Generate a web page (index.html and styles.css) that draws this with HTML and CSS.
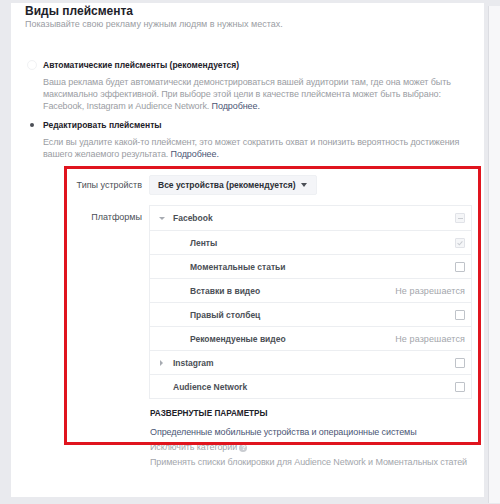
FILE: index.html
```html
<!DOCTYPE html>
<html lang="ru">
<head>
<meta charset="utf-8">
<title>Виды плейсмента</title>
<link rel="stylesheet" href="styles.css">
</head>
<body>
<div class="page">
  <div class="card">
    <div class="title">Виды плейсмента</div>
    <div class="subtitle">Показывайте свою рекламу нужным людям в нужных местах.</div>

    <div class="option first">
      <span class="radio-col"><span class="radio empty"></span></span>
      <div class="option-body">
        <div class="option-label">Автоматические плейсменты (рекомендуется)</div>
        <div class="option-desc">Ваша реклама будет автоматически демонстрироваться вашей аудитории там, где она может быть максимально эффективной. При выборе этой цели в качестве плейсмента может быть выбрано: Facebook, Instagram и Audience Network. <span class="more">Подробнее.</span></div>
      </div>
    </div>

    <div class="option second">
      <span class="radio-col"><span class="radio dot"></span></span>
      <div class="option-body">
        <div class="option-label">Редактировать плейсменты</div>
        <div class="option-desc">Если вы удалите какой-то плейсмент, это может сократить охват и понизить вероятность достижения вашего желаемого результата. <span class="more">Подробнее.</span></div>
      </div>
    </div>

    <div class="settings">
      <div class="set-label dev-label">Типы устройств</div>
      <div class="set-control">
        <span class="dropdown">Все устройства (рекомендуется) <span class="caret-down"></span></span>
      </div>

      <div class="set-label plat-label">Платформы</div>
      <div class="set-control plat-control">
        <div class="platforms">
          <div class="row">
            <span class="toggle"><span class="tri-down"></span></span>
            <span class="name">Facebook</span>
            <span class="chk disabled"><span class="minus"></span></span>
          </div>
          <div class="row sub">
            <span class="name">Ленты</span>
            <span class="chk disabled"><svg viewBox="0 0 10 10" width="8" height="8"><path d="M2 5.2 L4.2 7.2 L8 3" fill="none" stroke="#c9ccd1" stroke-width="1.3"/></svg></span>
          </div>
          <div class="row sub">
            <span class="name">Моментальные статьи</span>
            <span class="chk"></span>
          </div>
          <div class="row sub">
            <span class="name">Вставки в видео</span>
            <span class="na">Не разрешается</span>
          </div>
          <div class="row sub">
            <span class="name">Правый столбец</span>
            <span class="chk"></span>
          </div>
          <div class="row sub">
            <span class="name">Рекомендуеные видео</span>
            <span class="na">Не разрешается</span>
          </div>
          <div class="row">
            <span class="toggle"><span class="tri-right"></span></span>
            <span class="name">Instagram</span>
            <span class="chk"></span>
          </div>
          <div class="row">
            <span class="toggle"></span>
            <span class="name">Audience Network</span>
            <span class="chk"></span>
          </div>
        </div>
        <div class="adv-title">РАЗВЕРНУТЫЕ ПАРАМЕТРЫ</div>
        <div class="adv-link">Определенные мобильные устройства и операционные системы</div>
        <div class="adv-muted exclude">Исключить категории <span class="help">?</span></div>
        <div class="adv-muted">Применять списки блокировки для Audience Network и Моментальных статей</div>
      </div>
    </div>
  </div>
  <div class="side"></div>
  <div class="highlight"></div>
</div>
</body>
</html>
```

FILE: styles.css
```css
html, body {
  margin: 0;
  padding: 0;
}
body {
  background: #e9eaee;
  font-family: "Liberation Sans", Arial, sans-serif;
  font-size: 9px;
  letter-spacing: -0.1px;
  color: #1d2129;
  width: 500px;
  height: 504px;
  overflow: hidden;
}
.page {
  position: relative;
  display: flex;
  padding: 3px 0 0 11px;
}
.card {
  width: 473px;
  height: 494px;
  box-sizing: border-box;
  background: #fff;
  padding: 1px 0 0 14px;
}
.side {
  flex: 1;
  margin: 3px 0 0 4px;
  height: 497px;
  background: #f7f7f9;
  border-left: 1px solid #dcdde2;
}
.title {
  font-size: 12px;
  font-weight: bold;
  letter-spacing: 0;
  line-height: 14px;
}
.subtitle {
  color: #9a9da3;
  line-height: 12px;
  letter-spacing: 0;
}
.option {
  display: flex;
}
.option.first {
  margin-top: 29px;
}
.option.second {
  margin-top: 7px;
}
.radio-col {
  width: 18px;
  flex: none;
  position: relative;
}
.radio {
  position: absolute;
  top: 1px;
  left: 2px;
  width: 10px;
  height: 10px;
  border-radius: 50%;
  box-sizing: border-box;
}
.radio.empty {
  border: 1px solid #f1f2f4;
  background: #fff;
}
.radio.dot::after {
  content: "";
  position: absolute;
  left: 3px;
  top: 3px;
  width: 4px;
  height: 4px;
  border-radius: 50%;
  background: #4b4f56;
}
.option-body {
  width: 422px;
}
.option-label {
  font-weight: bold;
  font-size: 8.5px;
  letter-spacing: 0;
  line-height: 12px;
}
.option-desc {
  margin-top: 5px;
  color: #9a9da3;
  line-height: 12px;
}
.more {
  color: #4b5675;
}
.settings {
  display: grid;
  grid-template-columns: 117px 323px;
  column-gap: 7px;
  margin-top: 15px;
}
.set-label {
  text-align: right;
  color: #4b4f56;
  line-height: 12px;
  letter-spacing: 0;
}
.dev-label {
  padding-top: 4px;
}
.plat-label {
  margin-top: 10px;
  padding-top: 6px;
}
.plat-control {
  margin-top: 10px;
}
.dropdown {
  display: inline-flex;
  align-items: center;
  gap: 6px;
  height: 20px;
  box-sizing: border-box;
  padding: 0 9px 0 8px;
  background: #f4f5f8;
  border: 1px solid #eef0f3;
  border-radius: 2px;
  font-weight: bold;
  font-size: 8.5px;
  letter-spacing: 0;
  color: #2b2f36;
  line-height: 12px;
}
.caret-down {
  width: 0;
  height: 0;
  border-left: 3.5px solid transparent;
  border-right: 3.5px solid transparent;
  border-top: 4px solid #4b4f56;
}
.platforms {
  border: 1px solid #eceef1;
}
.row {
  display: flex;
  align-items: center;
  height: 23px;
  border-bottom: 1px solid #eceef1;
  padding-right: 6px;
}
.row:first-child {
  height: 24px;
}
.row:last-child {
  border-bottom: none;
}
.toggle {
  width: 23px;
  flex: none;
  display: flex;
  justify-content: center;
  align-items: center;
}
.tri-down {
  width: 0;
  height: 0;
  border-left: 3px solid transparent;
  border-right: 3px solid transparent;
  border-top: 3px solid #a7abb2;
}
.tri-right {
  width: 0;
  height: 0;
  border-top: 3px solid transparent;
  border-bottom: 3px solid transparent;
  border-left: 3px solid #a7abb2;
}
.row.sub {
  padding-left: 40px;
}
.name {
  flex: 1;
  font-weight: bold;
  font-size: 8.5px;
  letter-spacing: 0;
  color: #4b4f56;
  line-height: 12px;
}
.chk {
  width: 10px;
  height: 10px;
  box-sizing: border-box;
  border: 1px solid #bfc3c9;
  border-radius: 1px;
  background: #fff;
  display: flex;
  align-items: center;
  justify-content: center;
}
.chk.disabled {
  border-color: #e1e3e8;
  background: #f5f6f8;
}
.minus {
  width: 5px;
  height: 1px;
  background: #c9ccd1;
}
.na {
  color: #a3a6ac;
  line-height: 12px;
  letter-spacing: 0.1px;
}
.adv-title {
  margin-top: 9px;
  padding-left: 1px;
  font-weight: bold;
  font-size: 8.2px;
  letter-spacing: 0;
  color: #1d2129;
  line-height: 12px;
}
.adv-link {
  margin-top: 6px;
  padding-left: 1px;
  color: #4b5675;
  line-height: 12px;
}
.adv-muted {
  padding-left: 1px;
  color: #a3a6ac;
  line-height: 12px;
  margin-top: 3px;
}
.adv-muted.exclude {
  margin-top: 3px;
}
.help {
  display: inline-block;
  width: 8px;
  height: 8px;
  border-radius: 50%;
  background: #c9ccd1;
  color: #fff;
  font-size: 7px;
  line-height: 8px;
  text-align: center;
  font-weight: bold;
  vertical-align: middle;
}
.highlight {
  position: absolute;
  left: 64px;
  top: 166px;
  width: 417px;
  height: 279px;
  box-sizing: border-box;
  border: 3px solid #e0141e;
  pointer-events: none;
}
```
